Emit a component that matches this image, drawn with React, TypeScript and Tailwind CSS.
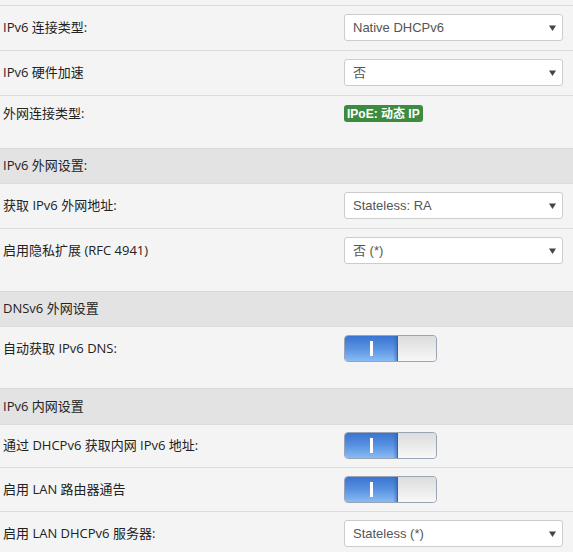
import React from "react";

const labelFont = { fontFamily: '"Open Sans", "Noto Sans CJK SC", sans-serif' };

function Select({ value }: { value: string }) {
  return (
    <div
      className="flex h-[27px] w-[219px] items-center justify-between rounded-[3px] border border-[#cccccc] bg-white pl-[8px] pr-[6px] text-[13px] text-[#555555]"
      style={{ fontFamily: '"Liberation Sans", "Noto Sans CJK SC", sans-serif' }}
    >
      <span>{value}</span>
      <svg width="7" height="6" viewBox="0 0 7 6">
        <path d="M0 0.5 H7 L3.5 6 Z" fill="#444444" />
      </svg>
    </div>
  );
}

function Toggle() {
  return (
    <div className="flex h-[27px] w-[93px] overflow-hidden rounded-[4px] border border-[#9aa4b4]">
      <div className="relative flex w-[53px] items-center justify-center border-r border-[#3a62a0] bg-gradient-to-b from-[#3874d2] via-[#5a92e1] to-[#88bbf4]">
        <div className="h-[15px] w-[3px] bg-white" />
        <div className="absolute right-0 top-0 h-full w-[4px] bg-gradient-to-r from-transparent to-[#2f5fa8]/50" />
      </div>
      <div className="flex-1 rounded-r-[3px] bg-gradient-to-b from-[#dcdcdc] to-[#f8f8f8]" />
    </div>
  );
}

function Row({
  label,
  h,
  pt = 9,
  children,
}: {
  label: string;
  h: number;
  pt?: number;
  children: React.ReactNode;
}) {
  return (
    <div
      className="flex border-t border-[#dcdcdc] bg-[#f4f4f4]"
      style={{ height: h, paddingTop: pt - 1 }}
    >
      <div
        className="w-[344px] shrink-0 pl-[3px] text-[13px] leading-[27px] text-[#222222]"
        style={labelFont}
      >
        {label}
      </div>
      <div>{children}</div>
    </div>
  );
}

function Header({ label, h }: { label: string; h: number }) {
  return (
    <div
      className="flex items-center border-t border-[#d8d8d8] bg-[#e3e3e3] pl-[3px] text-[13px] text-[#222222]"
      style={{ height: h, ...labelFont }}
    >
      {label}
    </div>
  );
}

export default function App() {
  return (
    <div className="h-[552px] w-[573px] overflow-hidden bg-[#f4f4f4]">
      <div className="h-[5px] bg-[#f4f4f4]" />
      <Row label="IPv6 连接类型:" h={45}>
        <Select value="Native DHCPv6" />
      </Row>
      <Row label="IPv6 硬件加速" h={45}>
        <Select value="否" />
      </Row>
      <div
        className="flex border-t border-[#dcdcdc] bg-[#f4f4f4] pt-[9px]"
        style={{ height: 53 }}
      >
        <div
          className="w-[344px] shrink-0 pl-[3px] text-[13px] leading-[17px] text-[#222222]"
          style={labelFont}
        >
          外网连接类型:
        </div>
        <div
          className="flex h-[17px] items-center rounded-[3px] bg-[#3d8b40] px-[3px] text-[12px] font-bold text-white"
          style={{ fontFamily: '"Liberation Sans", "Noto Sans CJK SC", sans-serif' }}
        >
          IPoE: 动态 IP
        </div>
      </div>
      <Header label="IPv6 外网设置:" h={35} />
      <Row label="获取 IPv6 外网地址:" h={45}>
        <Select value="Stateless: RA" />
      </Row>
      <Row label="启用隐私扩展 (RFC 4941)" h={63}>
        <Select value="否 (*)" />
      </Row>
      <Header label="DNSv6 外网设置" h={35} />
      <Row label="自动获取 IPv6 DNS:" h={62}>
        <Toggle />
      </Row>
      <Header label="IPv6 内网设置" h={36} />
      <Row label="通过 DHCPv6 获取内网 IPv6 地址:" h={43} pt={8}>
        <Toggle />
      </Row>
      <Row label="启用 LAN 路由器通告" h={44}>
        <Toggle />
      </Row>
      <Row label="启用 LAN DHCPv6 服务器:" h={45}>
        <Select value="Stateless (*)" />
      </Row>
    </div>
  );
}
